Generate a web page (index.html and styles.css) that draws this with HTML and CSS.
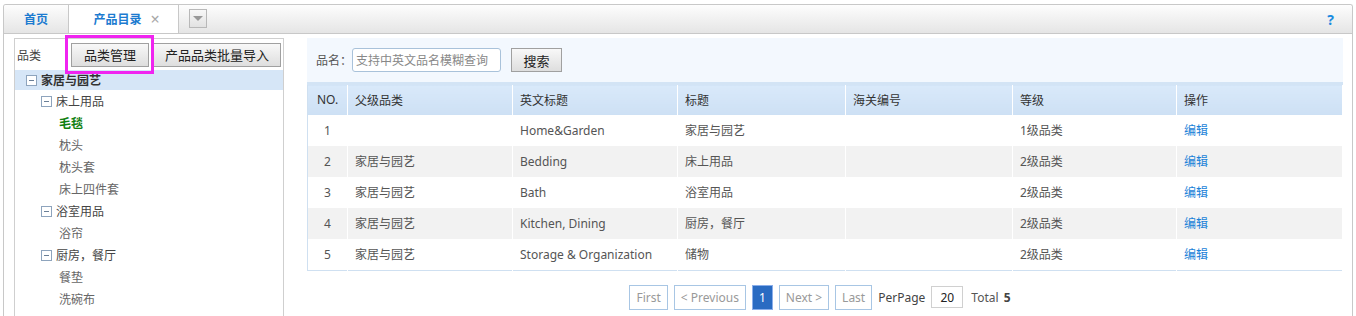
FILE: index.html
```html
<!DOCTYPE html>
<html lang="zh-CN">
<head>
    <meta charset="UTF-8">
    <title>产品目录</title>
    <link rel="stylesheet" href="styles.css">
</head>
<body>
    <div class="frame">
        <div class="tabbar">
            <a class="tab">首页</a>
            <a class="tab active">产品目录<span class="close">×</span></a>
            <span class="tab-menu"><i></i></span>
            <span class="help">?</span>
        </div>

        <div class="main">
            <div class="side">
                <div class="side-head">
                    <span class="side-title">品类</span>
                    <span class="mark-wrap">
                        <button class="btn">品类管理</button>
                        <span class="mark"></span>
                    </span>
                    <button class="btn">产品品类批量导入</button>
                </div>
                <ul class="tree">
                    <li class="node root"><span class="fold"></span>家居与园艺</li>
                    <li class="node lv1"><span class="fold"></span>床上用品</li>
                    <li class="node leaf current">毛毯</li>
                    <li class="node leaf">枕头</li>
                    <li class="node leaf">枕头套</li>
                    <li class="node leaf">床上四件套</li>
                    <li class="node lv1"><span class="fold"></span>浴室用品</li>
                    <li class="node leaf">浴帘</li>
                    <li class="node lv1"><span class="fold"></span>厨房，餐厅</li>
                    <li class="node leaf">餐垫</li>
                    <li class="node leaf">洗碗布</li>
                    <li class="node lv1"><span class="fold"></span></li>
                </ul>
            </div>

            <div class="content">
                <div class="search">
                    <label>品名：</label>
                    <input type="text" placeholder="支持中英文品名模糊查询">
                    <button class="btn btn-search">搜索</button>
                </div>

                <table class="grid">
                    <thead>
                        <tr>
                            <th class="no">NO.</th>
                            <th>父级品类</th>
                            <th>英文标题</th>
                            <th>标题</th>
                            <th>海关编号</th>
                            <th>等级</th>
                            <th>操作</th>
                        </tr>
                    </thead>
                    <tbody>
                        <tr>
                            <td class="no">1</td><td></td><td>Home&amp;Garden</td><td>家居与园艺</td><td></td><td>1级品类</td><td><a>编辑</a></td>
                        </tr>
                        <tr>
                            <td class="no">2</td><td>家居与园艺</td><td>Bedding</td><td>床上用品</td><td></td><td>2级品类</td><td><a>编辑</a></td>
                        </tr>
                        <tr>
                            <td class="no">3</td><td>家居与园艺</td><td>Bath</td><td>浴室用品</td><td></td><td>2级品类</td><td><a>编辑</a></td>
                        </tr>
                        <tr>
                            <td class="no">4</td><td>家居与园艺</td><td>Kitchen, Dining</td><td>厨房，餐厅</td><td></td><td>2级品类</td><td><a>编辑</a></td>
                        </tr>
                        <tr>
                            <td class="no">5</td><td>家居与园艺</td><td>Storage &amp; Organization</td><td>储物</td><td></td><td>2级品类</td><td><a>编辑</a></td>
                        </tr>
                    </tbody>
                </table>

                <div class="pager">
                    <span class="pg">First</span>
                    <span class="pg">&lt; Previous</span>
                    <span class="pg on">1</span>
                    <span class="pg">Next &gt;</span>
                    <span class="pg">Last</span>
                    <span class="per">PerPage</span>
                    <input class="per-input" type="text" value="20">
                    <span class="total">Total <b>5</b></span>
                </div>
            </div>
        </div>
    </div>
</body>
</html>
```

FILE: styles.css
```css
body {
    margin: 0;
    background: #fff;
    font-family: "Noto Sans", "Noto Sans CJK SC", sans-serif;
    font-size: 12px;
    color: #555;
}

.frame {
    margin: 4px 3px 0 3px;
    height: 312px;
    border: 1px solid #c8c8c8;
    border-bottom: none;
    border-radius: 3px 3px 0 0;
    overflow: hidden;
}

/* tabs */
.tabbar {
    display: flex;
    align-items: stretch;
    height: 28px;
    background: linear-gradient(#fdfdfd, #e5e5e5);
    border-bottom: 1px solid #c8c8c8;
}

.tab {
    display: flex;
    align-items: center;
    justify-content: center;
    font-size: 12px;
    font-weight: bold;
    color: #1c7bd0;
    cursor: pointer;
}

.tab:first-child {
    width: 64px;
}

.tab.active {
    width: 111px;
    background: #fff;
    border-left: 1px solid #c8c8c8;
    border-right: 1px solid #c8c8c8;
    padding-left: 6px;
    box-sizing: border-box;
}

.close {
    margin-left: 9px;
    font-size: 16px;
    font-weight: normal;
    color: #a8a8a8;
}

.tab-menu {
    width: 16px;
    height: 17px;
    margin: 4px 0 0 10px;
    border: 1px solid #b8b8b8;
    background: linear-gradient(#f8f8f8, #e2e2e2);
    display: flex;
    align-items: center;
    justify-content: center;
}

.tab-menu i {
    width: 0;
    height: 0;
    border-left: 5px solid transparent;
    border-right: 5px solid transparent;
    border-top: 5px solid #999;
}

.help {
    margin-left: auto;
    margin-right: 18px;
    align-self: center;
    font-size: 14px;
    font-weight: bold;
    color: #1a8ae0;
}

/* layout */
.main {
    display: flex;
    align-items: flex-start;
    padding: 4px 9px 0 10px;
}

.side {
    width: 268px;
    height: 300px;
    border: 1px solid #cfcfcf;
    border-bottom: none;
}

.side-head {
    display: flex;
    align-items: center;
    gap: 4px;
    height: 31px;
    padding-left: 2px;
}

.side-title {
    width: 50px;
    color: #444;
}

.btn {
    height: 24px;
    padding: 0 10px;
    border: 1px solid #a0a0a0;
    background: linear-gradient(#f8f8f8, #dedede);
    font-family: inherit;
    font-size: 13px;
    color: #222;
    cursor: pointer;
}

.mark-wrap {
    position: relative;
    display: flex;
}

.mark-wrap .btn {
    width: 78px;
}

.mark {
    position: absolute;
    left: -6px;
    top: -8px;
    width: 83px;
    height: 33px;
    border: 3px solid #f024f0;
    pointer-events: none;
}

.side-head > .btn {
    width: 128px;
    padding: 0;
}

.tree {
    list-style: none;
    margin: 0;
    padding: 0;
}

.node {
    display: flex;
    align-items: center;
    height: 22px;
    color: #555;
}

.node.root {
    height: 20px;
    padding-left: 11px;
    background: #d6e6f7;
    font-weight: bold;
    color: #333;
}

.node.lv1 {
    padding-left: 26px;
    color: #444;
}

.node.leaf {
    padding-left: 44px;
    color: #666;
}

.node.current {
    color: #108010;
    font-weight: bold;
}

.fold {
    position: relative;
    width: 9px;
    height: 9px;
    margin-right: 4px;
    border: 1px solid #8ea4bd;
    background: #fff;
}

.fold::after {
    content: "";
    position: absolute;
    left: 2px;
    right: 2px;
    top: 4px;
    height: 1px;
    background: #6a7f97;
}

.content {
    flex: 1;
    margin-left: 23px;
}

.search {
    display: flex;
    align-items: center;
    height: 44px;
    padding-left: 9px;
    background: #f3f8fe;
    color: #555;
}

.search input {
    width: 141px;
    height: 22px;
    padding: 0 3px;
    border: 1px solid #a9c2da;
    border-radius: 3px;
    font-family: inherit;
    font-size: 12px;
}

.search input::placeholder {
    color: #888;
}

.btn-search {
    width: 51px;
    margin-left: 10px;
    padding: 0;
}

/* table */
.grid {
    width: 100%;
    border-collapse: collapse;
    border: 1px solid #cfe0f1;
    border-top: 3px solid #d3e4f5;
    table-layout: fixed;
}

.grid th,
.grid td {
    padding: 0 0 0 7px;
    text-align: left;
    border-right: 1px solid #fff;
}

.grid th {
    box-sizing: border-box;
    height: 31px;
    font-weight: normal;
    color: #333;
    background: linear-gradient(#d9e9fa, #cde0f4);
}

.grid td {
    height: 31px;
    color: #555;
}

.grid tbody tr:nth-child(even) td {
    background: #f2f2f2;
}

.grid .no {
    width: 40px;
    text-align: center;
    padding: 0;
}

.grid th:nth-child(2) { width: 165px; }
.grid th:nth-child(3) { width: 165px; }
.grid th:nth-child(4) { width: 168px; }
.grid th:nth-child(5) { width: 167px; }
.grid th:nth-child(6) { width: 164px; }

.grid a {
    color: #1a82d8;
    cursor: pointer;
}

/* pager */
.pager {
    display: flex;
    align-items: center;
    justify-content: center;
    gap: 6px;
    margin-top: 14px;
    padding-right: 10px;
}

.pg {
    height: 23px;
    line-height: 23px;
    padding: 0 6px;
    border: 1px solid #a8c6e4;
    color: #999;
}

.pg.on {
    background: #2a6bc2;
    border-color: #8aaeea;
    color: #fff;
}

.per {
    color: #444;
}

.per-input {
    width: 30px;
    height: 20px;
    padding: 0;
    border: 1px solid #d0d0d0;
    text-align: center;
    font-family: inherit;
    font-size: 12px;
    color: #222;
}

.total {
    margin-left: 2px;
    color: #555;
}

.total b {
    color: #444;
    margin-left: 2px;
}
```
